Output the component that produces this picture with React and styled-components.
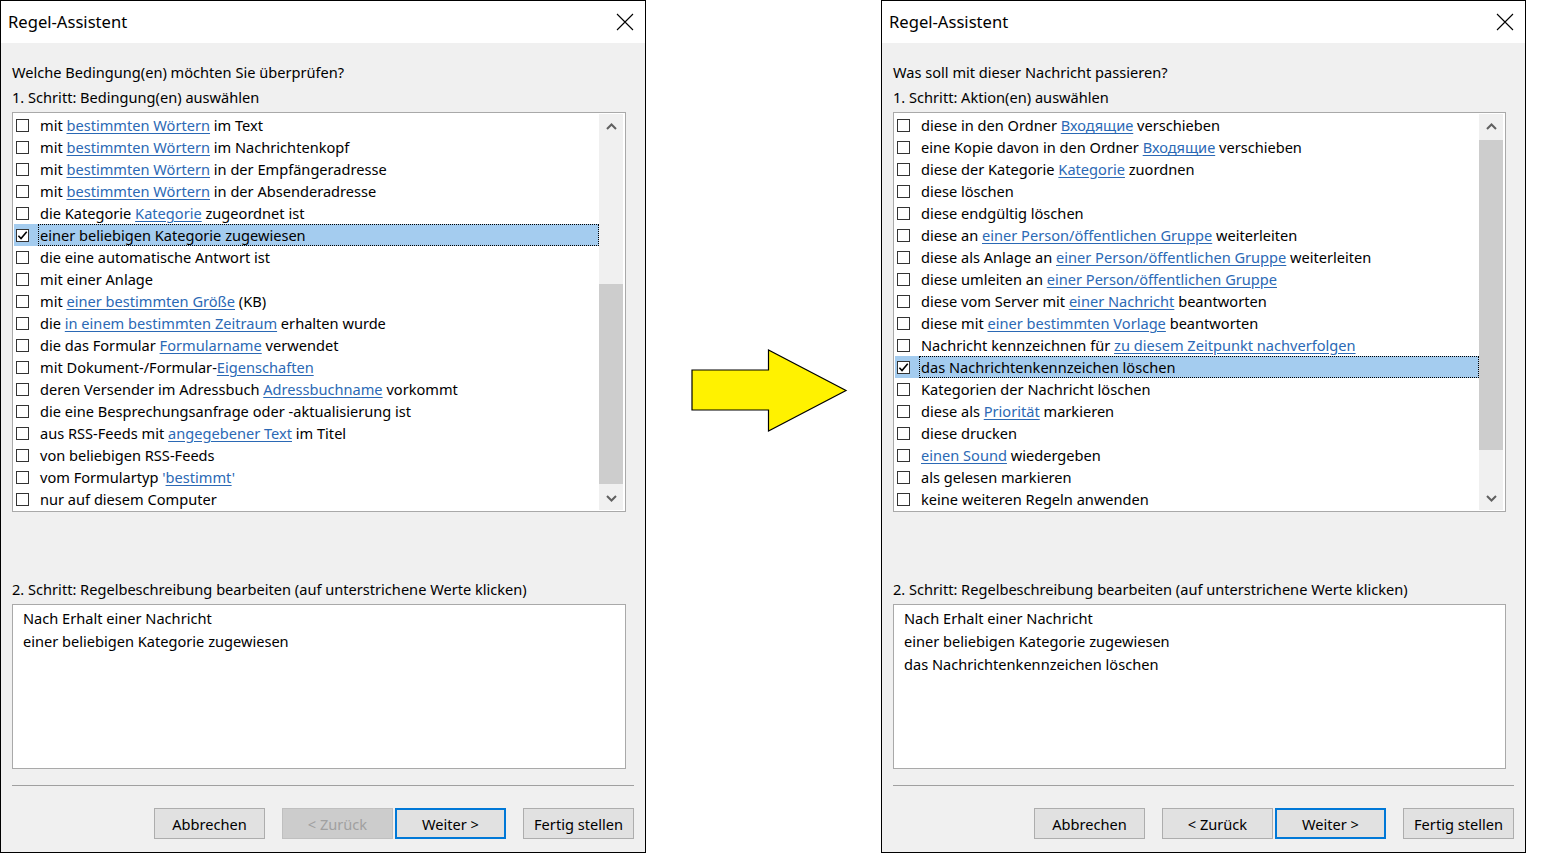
import React from 'react';
import styled, { createGlobalStyle } from 'styled-components';

const GlobalStyle = createGlobalStyle`
    html, body {
        margin: 0;
        padding: 0;
        background: #ffffff;
    }
    body {
        font-family: "Segoe UI", "Noto Sans", "Open Sans", sans-serif;
        color: #000000;
    }
`;

const leftRows = [
    ['mit ', {l: 'bestimmten Wörtern'}, ' im Text'],
    ['mit ', {l: 'bestimmten Wörtern'}, ' im Nachrichtenkopf'],
    ['mit ', {l: 'bestimmten Wörtern'}, ' in der Empfängeradresse'],
    ['mit ', {l: 'bestimmten Wörtern'}, ' in der Absenderadresse'],
    ['die Kategorie ', {l: 'Kategorie'}, ' zugeordnet ist'],
    ['einer beliebigen Kategorie zugewiesen'],
    ['die eine automatische Antwort ist'],
    ['mit einer Anlage'],
    ['mit ', {l: 'einer bestimmten Größe'}, ' (KB)'],
    ['die ', {l: 'in einem bestimmten Zeitraum'}, ' erhalten wurde'],
    ['die das Formular ', {l: 'Formularname'}, ' verwendet'],
    ['mit Dokument-/Formular-', {l: 'Eigenschaften'}],
    ['deren Versender im Adressbuch ', {l: 'Adressbuchname'}, ' vorkommt'],
    ['die eine Besprechungsanfrage oder -aktualisierung ist'],
    ['aus RSS-Feeds mit ', {l: 'angegebener Text'}, ' im Titel'],
    ['von beliebigen RSS-Feeds'],
    ['vom Formulartyp ', {q: "'"}, {l: 'bestimmt'}, {q: "'"}],
    ['nur auf diesem Computer'],
];

const rightRows = [
    ['diese in den Ordner ', {l: 'Входящие'}, ' verschieben'],
    ['eine Kopie davon in den Ordner ', {l: 'Входящие'}, ' verschieben'],
    ['diese der Kategorie ', {l: 'Kategorie'}, ' zuordnen'],
    ['diese löschen'],
    ['diese endgültig löschen'],
    ['diese an ', {l: 'einer Person/öffentlichen Gruppe'}, ' weiterleiten'],
    ['diese als Anlage an ', {l: 'einer Person/öffentlichen Gruppe'}, ' weiterleiten'],
    ['diese umleiten an ', {l: 'einer Person/öffentlichen Gruppe'}],
    ['diese vom Server mit ', {l: 'einer Nachricht'}, ' beantworten'],
    ['diese mit ', {l: 'einer bestimmten Vorlage'}, ' beantworten'],
    ['Nachricht kennzeichnen für ', {l: 'zu diesem Zeitpunkt nachverfolgen'}],
    ['das Nachrichtenkennzeichen löschen'],
    ['Kategorien der Nachricht löschen'],
    ['diese als ', {l: 'Priorität'}, ' markieren'],
    ['diese drucken'],
    [{l: 'einen Sound'}, ' wiedergeben'],
    ['als gelesen markieren'],
    ['keine weiteren Regeln anwenden'],
];

const Page = styled.div`
    display: flex;
    width: 1556px;
    height: 853px;
    align-items: flex-start;
`;

const Dialog = styled.div`
    box-sizing: border-box;
    width: ${p => p.$width}px;
    height: 853px;
    border: 1px solid #000000;
    background: #f0f0f0;
    display: flex;
    flex-direction: column;
    flex-shrink: 0;
`;

const TitleBar = styled.div`
    height: 42px;
    background: #ffffff;
    display: flex;
    align-items: center;
    justify-content: space-between;
    padding: 0 11px 0 6px;
`;

const Title = styled.div`
    font-size: 16.6px;
    color: #000000;
    margin-top: -1px;
    padding-left: 1px;
`;

const Body = styled.div`
    padding: 0 19px 0 11px;
    display: flex;
    flex-direction: column;
`;

const Label = styled.div`
    font-size: 14.6px;
    line-height: 20px;
    height: 20px;
    color: #000000;
    margin-top: ${p => p.$top}px;
`;

const ListBox = styled.div`
    margin-top: 5px;
    height: 400px;
    box-sizing: border-box;
    border: 1px solid #a9a9a9;
    background: #ffffff;
    padding: 1px;
    display: flex;
`;

const Rows = styled.div`
    flex: 1;
    display: flex;
    flex-direction: column;
    overflow: hidden;
`;

const Row = styled.div`
    height: 22px;
    flex-shrink: 0;
    display: flex;
    align-items: center;
    font-size: 14.6px;
    white-space: nowrap;
    background: ${p => (p.$selected ? '#a4ccef' : 'transparent')};
`;

const Box = styled.span`
    box-sizing: border-box;
    width: 13px;
    height: 13px;
    margin: 0 9px 0 2px;
    border: 1px solid #333333;
    background: #ffffff;
    flex-shrink: 0;
    display: flex;
    align-items: center;
    justify-content: center;
`;

const RowText = styled.span`
    flex: 1;
    height: 22px;
    box-sizing: border-box;
    line-height: 20px;
    padding-left: 1px;
    border: 1px dotted ${p => (p.$selected ? '#000000' : 'transparent')};
`;

const Link = styled.span`
    color: #2b69b5;
    text-decoration: underline;
    text-underline-offset: 2px;
`;

const Quote = styled.span`
    color: #2b69b5;
`;

const ScrollBar = styled.div`
    width: 24px;
    margin-right: 1px;
    background: #f0f0f0;
    display: flex;
    flex-direction: column;
`;

const ArrowBtn = styled.div`
    height: 24px;
    flex-shrink: 0;
    display: flex;
    align-items: center;
    justify-content: center;
`;

const Track = styled.div`
    flex: 1;
    position: relative;
`;

const Thumb = styled.div`
    position: absolute;
    left: 0;
    right: 0;
    background: #cdcdcd;
`;

const DescBox = styled.div`
    margin-top: 5px;
    height: 165px;
    box-sizing: border-box;
    border: 1px solid #a9a9a9;
    background: #ffffff;
    padding: 2px 10px;
    font-size: 14.6px;
    line-height: 23px;
`;

const Footer = styled.div`
    padding: 16px 11px 0 11px;
    display: flex;
    flex-direction: column;
`;

const Separator = styled.div`
    height: 1px;
    background: #a0a0a0;
`;

const Buttons = styled.div`
    display: flex;
    justify-content: flex-end;
    margin-top: 22px;
`;

const Button = styled.div`
    box-sizing: border-box;
    width: 111px;
    height: 31px;
    margin-left: ${p => p.$gap}px;
    background: ${p => (p.$disabled ? '#cccccc' : '#e1e1e1')};
    border: ${p => (p.$default ? '2px solid #0078d7' : `1px solid ${p.$disabled ? '#bfbfbf' : '#adadad'}`)};
    color: ${p => (p.$disabled ? '#a0a0a0' : '#000000')};
    font-size: 14.6px;
    display: flex;
    align-items: center;
    justify-content: center;
`;

const Gap = styled.div`
    width: 235px;
    height: 853px;
    flex-shrink: 0;
    display: flex;
    justify-content: flex-start;
    padding-top: 349px;
    padding-left: 45px;
    box-sizing: border-box;
`;

const Close = () => (
    <svg width="18" height="18" viewBox="0 0 18 18">
        <path d="M1 1 L17 17 M17 1 L1 17" stroke="#000" strokeWidth="1.1" fill="none" />
    </svg>
);

const Check = () => (
    <svg width="11" height="11" viewBox="0 0 12 12">
        <path d="M1.5 6.2 L4.4 9.4 L10.6 1.8" stroke="#000" strokeWidth="1.7" fill="none" />
    </svg>
);

const Chevron = ({down}) => (
    <svg width="11" height="7" viewBox="0 0 11 7">
        <path d={down ? 'M1 1 L5.5 5.5 L10 1' : 'M1 6 L5.5 1.5 L10 6'} stroke="#606060" strokeWidth="2" fill="none" />
    </svg>
);

const Arrow = () => (
    <svg width="158" height="84" viewBox="0 0 158 84">
        <polygon points="1,21 77.5,21 77.5,1 155,41.5 77.5,82 77.5,61 1,61"
            fill="#fff200" stroke="#000" strokeWidth="1.2" />
    </svg>
);

const renderParts = (parts) => parts.map((p, i) => {
    if (typeof p === 'string') return <React.Fragment key={i}>{p}</React.Fragment>;
    if (p.q) return <Quote key={i}>{p.q}</Quote>;
    return <Link key={i}>{p.l}</Link>;
});

const RuleList = ({rows, selected, thumbTop, thumbHeight}) => (
    <ListBox>
        <Rows>
            {rows.map((r, i) => (
                <Row key={i} $selected={i === selected}>
                    <Box>{i === selected && <Check />}</Box>
                    <RowText $selected={i === selected}>{renderParts(r)}</RowText>
                </Row>
            ))}
        </Rows>
        <ScrollBar>
            <ArrowBtn><Chevron /></ArrowBtn>
            <Track>
                <Thumb style={{top: thumbTop, height: thumbHeight}} />
            </Track>
            <ArrowBtn><Chevron down /></ArrowBtn>
        </ScrollBar>
    </ListBox>
);

const Wizard = ({width, question, step1, rows, selected, thumbTop, thumbHeight, desc, backDisabled}) => (
    <Dialog $width={width}>
        <TitleBar>
            <Title>Regel-Assistent</Title>
            <Close />
        </TitleBar>
        <Body>
            <Label $top={19}>{question}</Label>
            <Label $top={5}>{step1}</Label>
            <RuleList rows={rows} selected={selected} thumbTop={thumbTop} thumbHeight={thumbHeight} />
            <Label $top={67}>2. Schritt: Regelbeschreibung bearbeiten (auf unterstrichene Werte klicken)</Label>
            <DescBox>
                {desc.map((d, i) => <div key={i}>{d}</div>)}
            </DescBox>
        </Body>
        <Footer>
            <Separator />
            <Buttons>
                <Button $gap={0}>Abbrechen</Button>
                <Button $gap={17} $disabled={backDisabled}>&lt; Zurück</Button>
                <Button $gap={2} $default>Weiter &gt;</Button>
                <Button $gap={17}>Fertig stellen</Button>
            </Buttons>
        </Footer>
    </Dialog>
);

export default function App() {
    return (
        <>
            <GlobalStyle />
            <Page>
                <Wizard
                    width={646}
                    question="Welche Bedingung(en) möchten Sie überprüfen?"
                    step1="1. Schritt: Bedingung(en) auswählen"
                    rows={leftRows}
                    selected={5}
                    thumbTop={146}
                    thumbHeight={200}
                    desc={['Nach Erhalt einer Nachricht', 'einer beliebigen Kategorie zugewiesen']}
                    backDisabled
                />
                <Gap>
                    <Arrow />
                </Gap>
                <Wizard
                    width={645}
                    question="Was soll mit dieser Nachricht passieren?"
                    step1="1. Schritt: Aktion(en) auswählen"
                    rows={rightRows}
                    selected={11}
                    thumbTop={2}
                    thumbHeight={310}
                    desc={['Nach Erhalt einer Nachricht', 'einer beliebigen Kategorie zugewiesen', 'das Nachrichtenkennzeichen löschen']}
                />
            </Page>
        </>
    );
}
